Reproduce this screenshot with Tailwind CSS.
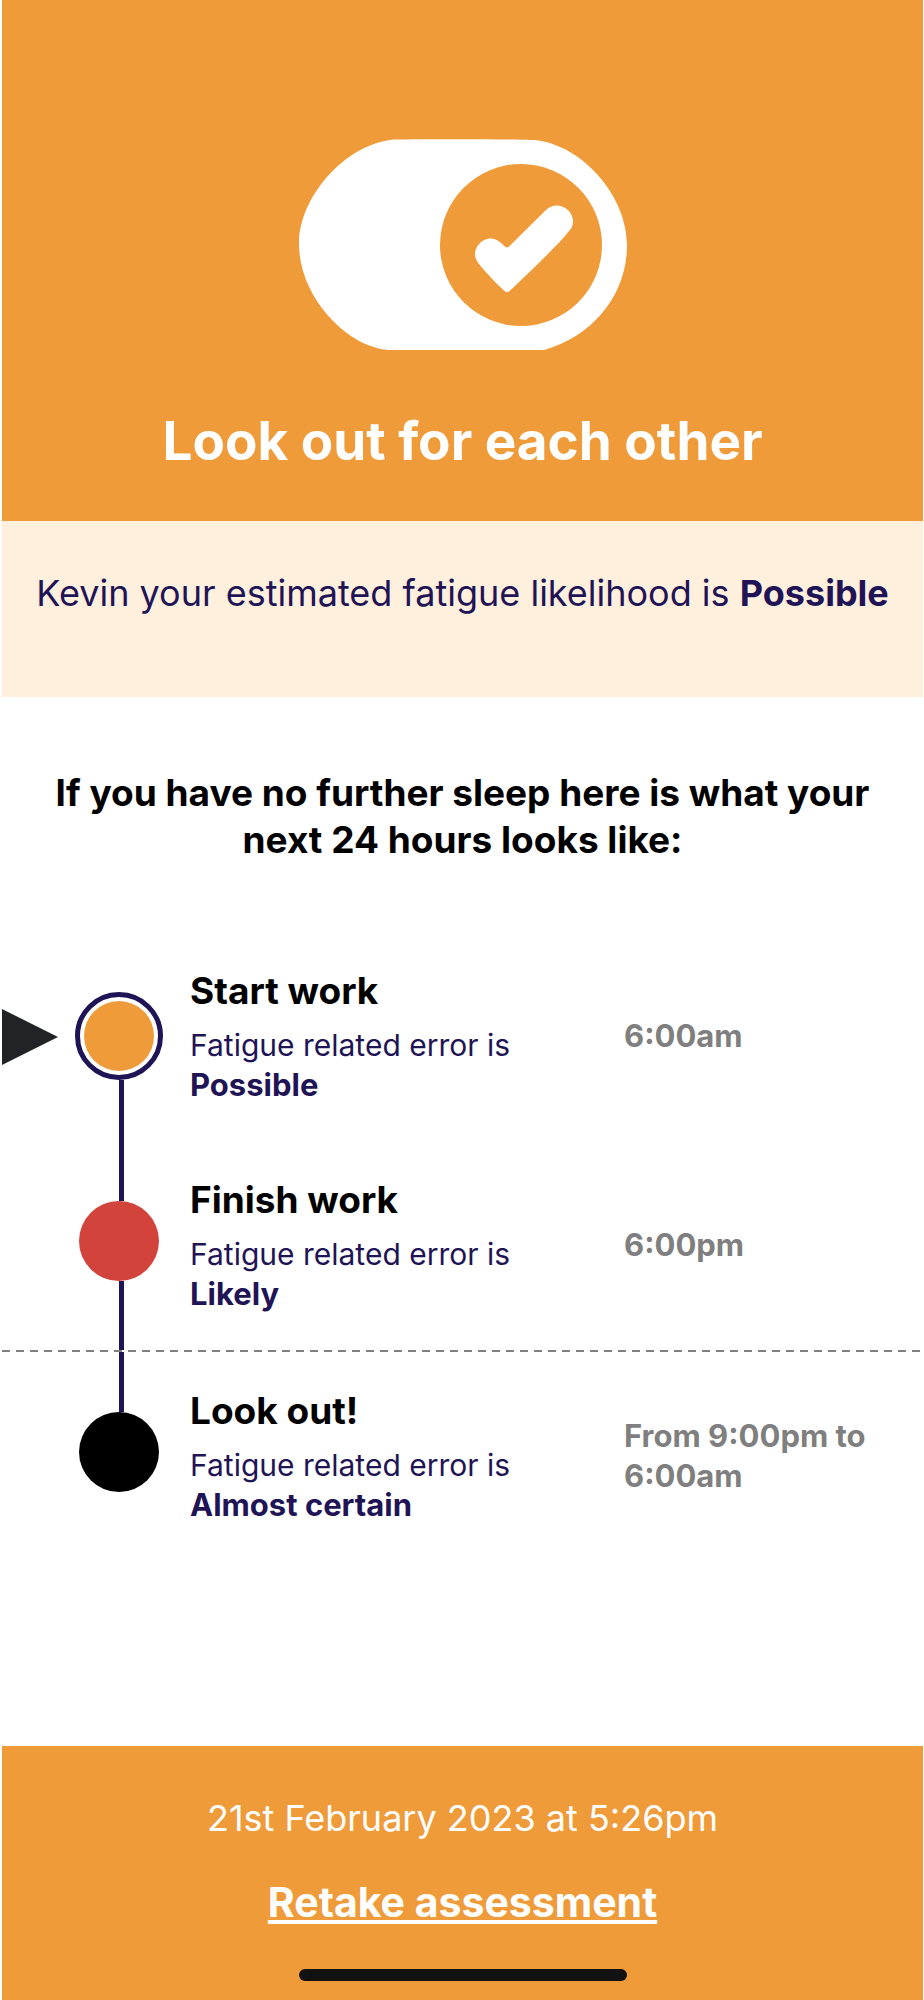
<!DOCTYPE html>
<html lang="en">
<head>
<meta charset="utf-8">
<meta name="viewport" content="width=device-width, initial-scale=1">
<title>Look out for each other</title>
<script src="https://cdn.jsdelivr.net/npm/@tailwindcss/browser@4"></script>
</head>
<body class="bg-white font-['Inter',sans-serif] text-black">
<div class="flex min-h-screen flex-col pr-px pl-[2px]">

  <header class="flex flex-col items-center bg-[#ef9b3a] pt-[139px] pb-[47px] text-center text-white">
    <svg class="h-[211px] w-[328px]" viewBox="0 0 328 211" aria-hidden="true">
      <path fill="#fff" d="M95 0.500C115 0 215 0 235 1C282 5 328 56 328 106C328 156 294 197 245 211L98 211C90 211 85 211 78 209C42 200 0 155 0 105C0 58 46 5 95 0.500Z"/>
      <circle cx="222" cy="106" r="81" fill="#ef9b3a"/>
      <path fill="#fff" d="M181 104C187 98 196 98 202 104L206 107.500Q208 109.500 210 107.500L247 71C253 65 262 65 269 71C275 77 276 86 270 92C258 107 238 126 210 152.500Q208 154 206 152.500C198 145 188 135 180 125C174 118 175 110 181 104Z"/>
    </svg>
    <h1 class="mt-[58px] text-[53px] leading-[66px] font-bold">Look out for each other</h1>
  </header>

  <p class="bg-[#ffefdd] pt-[50px] pb-[82px] text-center text-[36px] leading-[44px] text-[#1f1456]">Kevin your estimated fatigue likelihood is <strong class="font-bold">Possible</strong></p>

  <main class="flex-1">
    <h2 class="px-10 pt-[72px] text-center text-[37px] leading-[47px] font-bold">If you have no further sleep here is what your next 24 hours looks like:</h2>

    <ol class="pt-[107px]">
      <li class="grid h-[209px] grid-cols-[73px_115px_minmax(0,1fr)_299px]">
        <svg class="mt-[39px] h-[56px] w-[56px]" viewBox="0 0 56 56" aria-hidden="true"><path fill="#212327" d="M0 0L56 28L0 56Z"/></svg>
        <div class="flex w-[88px] flex-col items-center pt-[22px]">
          <span class="size-[88px] rounded-full border-5 border-[#1f1456] bg-[#ef9b3a] bg-clip-content p-[4px]"></span>
          <span class="ml-[5px] w-[5px] flex-1 bg-[#1f1456]"></span>
        </div>
        <div>
          <h3 class="text-[37px] leading-[42px] font-bold">Start work</h3>
          <p class="mt-[13px] text-[30px] leading-[40px] text-[#1f1456]">Fatigue related error is<br><strong class="text-[31px] font-bold">Possible</strong></p>
        </div>
        <p class="mt-[46px] pr-8 text-[31px] leading-[40px] font-bold text-[#7f7f7f]">6:00am</p>
      </li>
      <li class="grid h-[171px] grid-cols-[73px_115px_minmax(0,1fr)_299px]">
        <span></span>
        <div class="flex w-[88px] flex-col items-center">
          <span class="ml-[5px] h-[22px] w-[5px] bg-[#1f1456]"></span>
          <span class="size-[80px] rounded-full bg-[#d2433b]"></span>
          <span class="ml-[5px] w-[5px] flex-1 bg-[#1f1456]"></span>
        </div>
        <div>
          <h3 class="text-[37px] leading-[42px] font-bold">Finish work</h3>
          <p class="mt-[13px] text-[30px] leading-[40px] text-[#1f1456]">Fatigue related error is<br><strong class="text-[31px] font-bold">Likely</strong></p>
        </div>
        <p class="mt-[46px] pr-8 text-[31px] leading-[40px] font-bold text-[#7f7f7f]">6:00pm</p>
      </li>
      <li>
        <div class="h-[2px] bg-[repeating-linear-gradient(90deg,#808080_0_8px,transparent_8px_14px)]"></div>
        <div class="grid grid-cols-[73px_115px_minmax(0,1fr)_299px]">
          <span></span>
          <div class="flex w-[88px] flex-col items-center">
            <span class="ml-[5px] h-[60px] w-[5px] bg-[#1f1456]"></span>
            <span class="size-[80px] rounded-full bg-black"></span>
          </div>
          <div class="pt-[38px]">
            <h3 class="text-[37px] leading-[42px] font-bold">Look out!</h3>
            <p class="mt-[13px] text-[30px] leading-[40px] text-[#1f1456]">Fatigue related error is<br><strong class="text-[31px] font-bold">Almost certain</strong></p>
          </div>
          <p class="mt-[64px] pr-8 text-[31px] leading-[40px] font-bold text-[#7f7f7f]">From 9:00pm to 6:00am</p>
        </div>
      </li>
    </ol>
  </main>

  <footer class="flex flex-col items-center bg-[#ef9b3a] pt-[50px] pb-[19px] text-center text-white">
    <p class="text-[36px] leading-[44px]">21st February 2023 at 5:26pm</p>
    <a href="#" class="mt-[37px] text-[41px] leading-[50px] font-bold underline decoration-[4px] underline-offset-[3px]">Retake assessment</a>
    <span class="mt-[42px] h-[12px] w-[328px] rounded-full bg-[#121212]"></span>
  </footer>
</div>
</body>
</html>
